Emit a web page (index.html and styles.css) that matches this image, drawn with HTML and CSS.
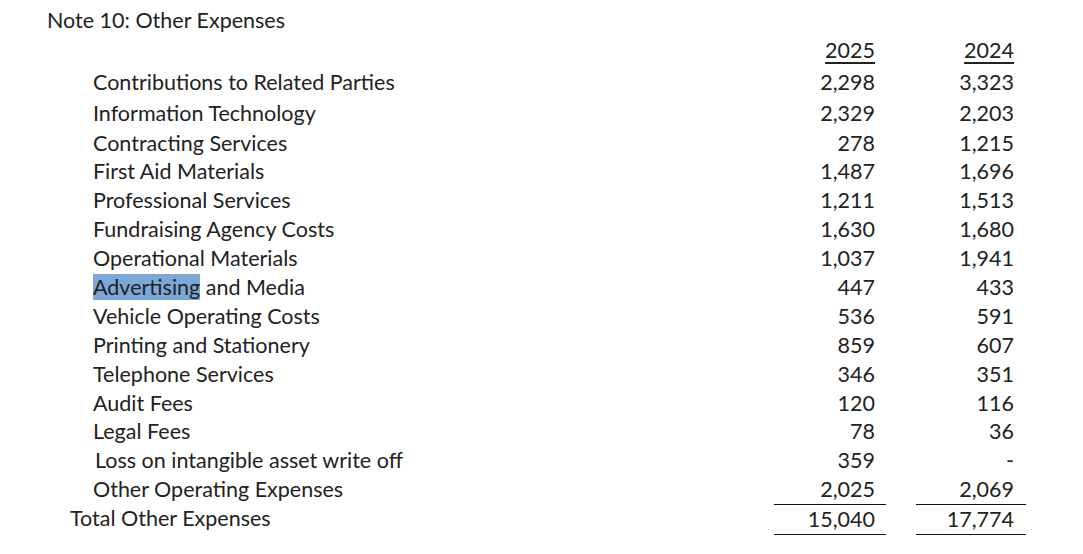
FILE: index.html
```html
<!DOCTYPE html>
<html>
<head>
<meta charset="utf-8">
<link rel="stylesheet" href="styles.css">
</head>
<body>
<div class="page">
  <div class="title">Note 10: Other Expenses</div>
  <div class="grid">
    <div class="lab"></div><div class="num"><span class="u">2025</span></div><div class="sp"></div><div class="num"><span class="u">2024</span></div>
    <div class="lab">Contributions to Related Parties</div><div class="num">2,298</div><div class="sp"></div><div class="num">3,323</div>
    <div class="lab">Information Technology</div><div class="num">2,329</div><div class="sp"></div><div class="num">2,203</div>
    <div class="lab">Contracting Services</div><div class="num">278</div><div class="sp"></div><div class="num">1,215</div>
    <div class="lab">First Aid Materials</div><div class="num">1,487</div><div class="sp"></div><div class="num">1,696</div>
    <div class="lab">Professional Services</div><div class="num">1,211</div><div class="sp"></div><div class="num">1,513</div>
    <div class="lab">Fundraising Agency Costs</div><div class="num">1,630</div><div class="sp"></div><div class="num">1,680</div>
    <div class="lab">Operational Materials</div><div class="num">1,037</div><div class="sp"></div><div class="num">1,941</div>
    <div class="lab"><span class="hl">Advertising</span> and Media</div><div class="num">447</div><div class="sp"></div><div class="num">433</div>
    <div class="lab">Vehicle Operating Costs</div><div class="num">536</div><div class="sp"></div><div class="num">591</div>
    <div class="lab">Printing and Stationery</div><div class="num">859</div><div class="sp"></div><div class="num">607</div>
    <div class="lab">Telephone Services</div><div class="num">346</div><div class="sp"></div><div class="num">351</div>
    <div class="lab">Audit Fees</div><div class="num">120</div><div class="sp"></div><div class="num">116</div>
    <div class="lab">Legal Fees</div><div class="num">78</div><div class="sp"></div><div class="num">36</div>
    <div class="lab shift">Loss on intangible asset write off</div><div class="num">359</div><div class="sp"></div><div class="num">-</div>
    <div class="lab">Other Operating Expenses</div><div class="num">2,025</div><div class="sp"></div><div class="num">2,069</div>
    <div class="lab total">Total Other Expenses</div><div class="num tot">15,040</div><div class="sp"></div><div class="num tot">17,774</div>
  </div>
</div>
</body>
</html>
```
FILE: styles.css
```css
html, body {
  margin: 0;
  padding: 0;
  background: #ffffff;
}
.page {
  font-family: "Lato", "Open Sans", sans-serif;
  font-size: 21.5px;
  color: #222222;
  padding-top: 6px;
}
.title {
  padding-left: 47px;
  height: 30px;
  line-height: 29px;
}
.grid {
  display: grid;
  grid-template-columns: 774px 112px 30px 110px;
  grid-template-rows: 32px 31px 29.5px repeat(13, 28.9px) 31px;
  line-height: 29px;
}
.lab {
  padding-left: 93px;
  white-space: nowrap;
}
.lab.shift {
  padding-left: 95px;
}
.lab.total {
  padding-left: 70px;
}
.num {
  text-align: right;
  padding-right: 11px;
}
.grid > .num:nth-child(4n) {
  padding-right: 12px;
}
.u {
  text-decoration: underline;
  text-decoration-thickness: 1.5px;
  text-underline-offset: 4px;
}
.hl {
  background: #7ba7d9;
}
.tot {
  box-sizing: border-box;
  border-top: 1.5px solid #111111;
  border-bottom: 1.5px solid #111111;
}
```
